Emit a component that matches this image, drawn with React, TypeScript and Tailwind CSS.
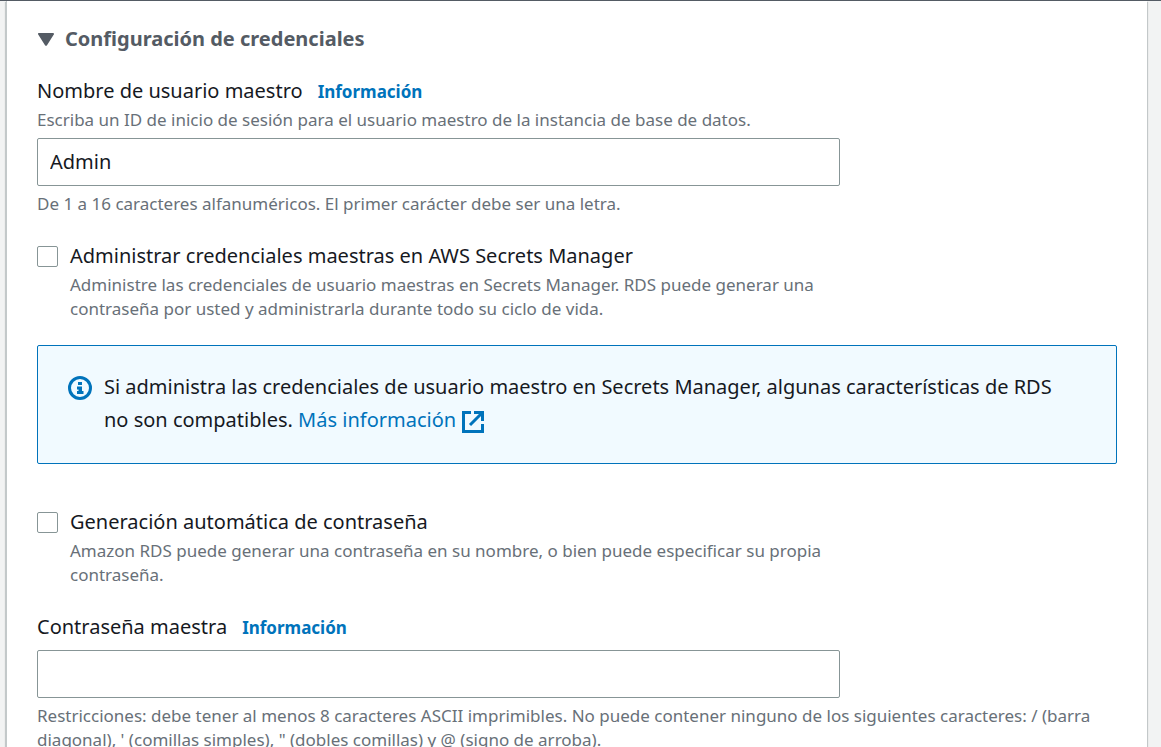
import type { ReactNode } from "react";

function InfoLink() {
  return (
    <a href="#info" className="ml-[15px] text-[17px] leading-6 font-bold text-[#0073bb]">
      Información
    </a>
  );
}

function Hint({ id, children }: { id: string; children: ReactNode }) {
  return (
    <p id={id} className="text-[17px] leading-6 text-[#687078]">
      {children}
    </p>
  );
}

function CheckOption({ id, title, children }: { id: string; title: string; children: ReactNode }) {
  return (
    <div className="flex max-w-[803px] items-start gap-3">
      <input
        id={id}
        type="checkbox"
        aria-describedby={id + "-hint"}
        className="mt-[5px] size-[21px] shrink-0 appearance-none rounded-[2px] border border-[#879596] bg-white checked:bg-[#0073bb]"
      />
      <div>
        <label htmlFor={id} className="mb-0.5 block text-[20px] leading-[30px]">
          {title}
        </label>
        <Hint id={id + "-hint"}>{children}</Hint>
      </div>
    </div>
  );
}

const inputClass =
  "block h-12 w-full max-w-[803px] rounded-[2px] border border-[#879596] bg-white px-3 pb-0.5 text-[20px] outline-none focus:border-[#0073bb]";

export default function App() {
  return (
    <div className="min-h-screen border-t border-[#545b64] bg-[#f2f3f3] pr-3.5 pl-1.5 font-['Noto_Sans',sans-serif] text-[#16191f]">
      <main className="min-h-screen border-l border-[#c3c9ca] bg-white px-[30px] pt-[23px] pb-6 shadow-[0_1px_1px_0_rgba(0,28,36,0.3),1px_1px_1px_0_rgba(0,28,36,0.15),-1px_1px_1px_0_rgba(0,28,36,0.15)]">
        <h2 className="mb-[22px]">
          <button
            type="button"
            aria-expanded="true"
            className="flex items-center gap-[11px] text-[20px] leading-[30px] font-bold text-[#545b64]"
          >
            <svg width="17" height="13" viewBox="0 0 17 13" fill="currentColor" aria-hidden="true">
              <path d="M2 0h14c.9 0 1.300.9.8 1.600L10 12.200c-.5.8-1.500.8-2 0L1.200 1.600C.7.9 1.100 0 2 0Z" />
            </svg>
            Configuración de credenciales
          </button>
        </h2>

        <div className="mb-[25px]">
          <div className="mb-0.5 text-[20px] leading-[30px]">
            <label htmlFor="username">Nombre de usuario maestro</label>
            <InfoLink />
          </div>
          <Hint id="username-hint">
            Escriba un ID de inicio de sesión para el usuario maestro de la instancia de base de datos.
          </Hint>
          <input
            id="username"
            type="text"
            defaultValue="Admin"
            aria-describedby="username-hint username-rule"
            className={inputClass + " my-1.5"}
          />
          <Hint id="username-rule">De 1 a 16 caracteres alfanuméricos. El primer carácter debe ser una letra.</Hint>
        </div>

        <CheckOption id="secrets" title="Administrar credenciales maestras en AWS Secrets Manager">
          Administre las credenciales de usuario maestras en Secrets Manager. RDS puede generar una contraseña por usted
          y administrarla durante todo su ciclo de vida.
        </CheckOption>

        <div className="mt-6 mb-[43px] flex items-start gap-3 rounded-[2px] border border-[#0073bb] bg-[#f1faff] pt-6 pr-[50px] pb-[27px] pl-[30px]">
          <svg
            width="24"
            height="24"
            viewBox="0 0 24 24"
            fill="none"
            className="mt-1.5 shrink-0 text-[#0073bb]"
            aria-hidden="true"
          >
            <circle cx="12" cy="12" r="10.500" stroke="currentColor" strokeWidth="3" />
            <path d="M10 6h4v3h-4zM9 10.500h5V15h1.500v3H9v-3h1.500v-1.500H9z" fill="currentColor" />
          </svg>
          <p className="text-[20px] leading-[33px]">
            Si administra las credenciales de usuario maestro en Secrets Manager, algunas características de RDS no son
            compatibles.{" "}
            <a href="#more" className="text-[#0073bb]">
              Más información
              <svg
                width="22"
                height="22"
                viewBox="0 0 22 22"
                fill="none"
                stroke="currentColor"
                strokeWidth="3"
                className="ml-1.5 inline-block"
                aria-hidden="true"
              >
                <path d="M9 1.500H1.500v19h19V13M12 1.500h8.500V10M20 2 8 14" />
              </svg>
            </a>
          </p>
        </div>

        <CheckOption id="autogen" title="Generación automática de contraseña">
          Amazon RDS puede generar una contraseña en su nombre, o bien puede especificar su propia contraseña.
        </CheckOption>

        <div className="mt-[25px]">
          <div className="mb-2 text-[20px] leading-[30px]">
            <label htmlFor="password">Contraseña maestra</label>
            <InfoLink />
          </div>
          <input id="password" type="password" aria-describedby="password-rule" className={inputClass + " mb-1.5"} />
          <Hint id="password-rule">
            Restricciones: debe tener al menos 8 caracteres ASCII imprimibles. No puede contener ninguno de los
            siguientes caracteres: / (barra diagonal), ' (comillas simples), " (dobles comillas) y @ (signo de arroba).
          </Hint>
        </div>
      </main>
    </div>
  );
}
